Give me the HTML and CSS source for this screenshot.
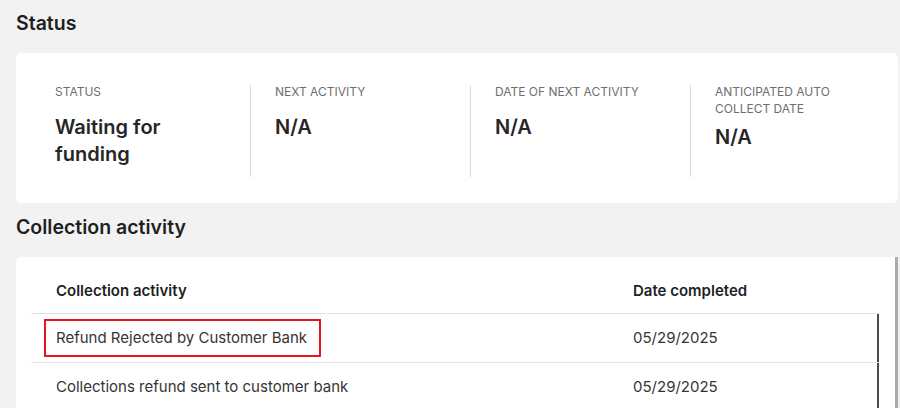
FILE: index.html
```html
<!DOCTYPE html>
<html lang="en">
<head>
<meta charset="utf-8">
<title>Collection status</title>
<link rel="stylesheet" href="styles.css">
</head>
<body>
<main class="page">
  <h2 class="section-title">Status</h2>
  <section class="card status-card">
    <div class="stat">
      <div class="stat-label">Status</div>
      <div class="stat-value">Waiting for funding</div>
    </div>
    <div class="stat">
      <div class="stat-label">Next activity</div>
      <div class="stat-value">N/A</div>
    </div>
    <div class="stat">
      <div class="stat-label">Date of next activity</div>
      <div class="stat-value">N/A</div>
    </div>
    <div class="stat">
      <div class="stat-label">Anticipated auto collect date</div>
      <div class="stat-value">N/A</div>
    </div>
  </section>

  <h2 class="section-title section-title--second">Collection activity</h2>
  <section class="card activity-card">
    <table class="activity-table">
      <thead>
        <tr>
          <th class="col-activity">Collection activity</th>
          <th class="col-date">Date completed</th>
        </tr>
      </thead>
      <tbody>
        <tr>
          <td class="col-activity col-activity--marked"><span class="highlight">Refund Rejected by Customer Bank</span></td>
          <td class="col-date">05/29/2025</td>
        </tr>
        <tr>
          <td class="col-activity">Collections refund sent to customer bank</td>
          <td class="col-date">05/29/2025</td>
        </tr>
      </tbody>
    </table>
  </section>
</main>
</body>
</html>
```

FILE: styles.css
```css
* { box-sizing: border-box; }

html, body {
  margin: 0;
  padding: 0;
  background: #f2f2f2;
  font-family: "Inter", "Roboto", "Liberation Sans", sans-serif;
  color: #222;
}

.page {
  padding: 10px 2px 0 16px;
  overflow: hidden;
  height: 408px;
}

.section-title {
  margin: 0 0 16px 0;
  font-size: 19.5px;
  line-height: 27px;
  font-weight: 600;
  color: #1f1f1f;
}

.section-title--second {
  margin-top: 11px;
  margin-bottom: 16px;
}

.card {
  background: #fff;
  border-radius: 5px;
}

.status-card {
  display: flex;
  overflow: hidden;
  padding: 32px 0 26px 14px;
}

.stat {
  flex: 0 0 220px;
  min-height: 92px;
  padding: 0 20px 0 24px;
  border-left: 1px solid #dcdcdc;
}

.stat:first-child {
  padding-left: 25px;
  border-left: 0;
}

.stat-label {
  margin-top: -2px;
  min-height: 24px;
  max-width: 160px;
  font-size: 12px;
  line-height: 17px;
  font-weight: 400;
  text-transform: uppercase;
  color: #6e6e6e;
}

.stat-value {
  margin-top: 7px;
  font-size: 20px;
  line-height: 27px;
  font-weight: 600;
  color: #262626;
  max-width: 150px;
}

.activity-card {
  padding: 12px 0 0 15px;
  border-radius: 5px 0 0 0;
  border-right: 3px solid #ababab;
  height: 160px;
}

.activity-table {
  width: 848px;
  border-collapse: collapse;
  font-size: 15px;
  color: #333;
}

.activity-table th {
  height: 44px;
  padding: 0 0 0 25px;
  text-align: left;
  font-weight: 600;
  color: #1f1f1f;
  border-bottom: 1px solid #e2e2e2;
}

.activity-table td {
  height: 49px;
  padding: 0 0 0 25px;
  border-bottom: 1px solid #e2e2e2;
  color: #353535;
}

.activity-table tbody tr {
  box-shadow: inset -2px 0 0 #4a4a4a;
}

.col-activity {
  width: 577px;
}

.activity-table td.col-activity--marked {
  padding-left: 13px;
}

.highlight {
  display: inline-block;
  line-height: 34px;
  padding: 0 12px 0 10px;
  border: 2px solid #e8131b;
}
```
